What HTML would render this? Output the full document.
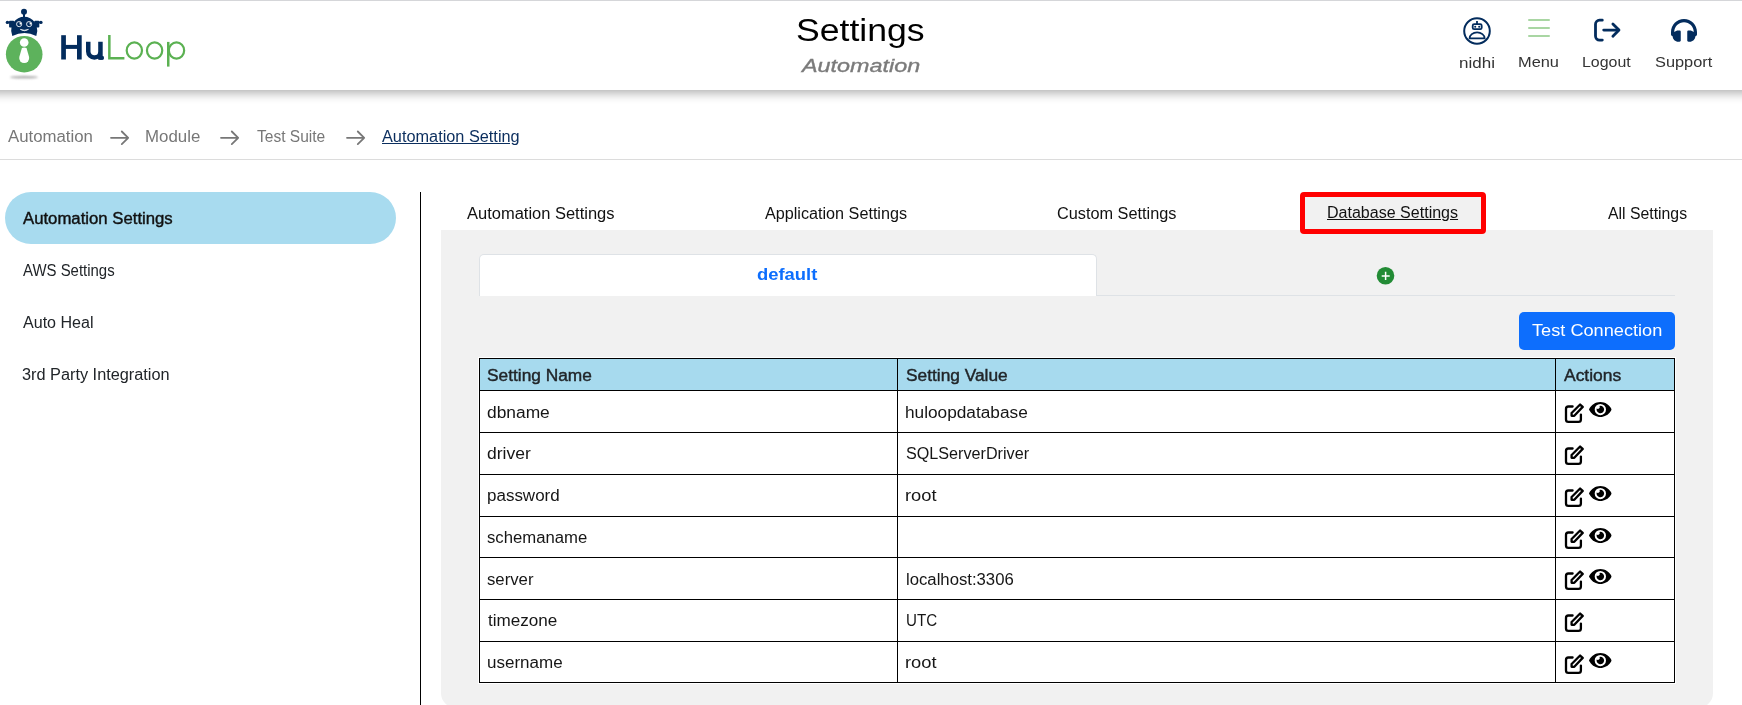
<!DOCTYPE html>
<html>
<head>
<meta charset="utf-8">
<title>Settings</title>
<style>
*{margin:0;padding:0;box-sizing:border-box;}
html,body{width:1742px;height:705px;overflow:hidden;background:#fff;}
body{position:relative;font-family:"Liberation Sans",sans-serif;color:#212529;}
.a{position:absolute;white-space:nowrap;}
#topline{left:0;top:0;width:1742px;height:1px;background:#d5d6d9;}
#header{left:-30px;top:1px;width:1802px;height:89px;background:#fff;box-shadow:0 3px 10px rgba(0,0,0,0.32);}
#hr{left:0;top:159px;width:1742px;height:1px;background:#dcdcdc;}
#pill{left:5px;top:192px;width:391px;height:52px;border-radius:26px;background:#a8dbef;}
#vline{left:420px;top:192px;width:1px;height:513px;background:#000;}
#panel{left:441px;top:230px;width:1272px;height:478px;background:#f1f1f1;border-radius:0 0 15px 15px;}
#redbox{left:1300px;top:192px;width:186px;height:42px;border:5px solid #f00;border-radius:4px;background:#f1f1f1;}
#itab{left:479px;top:254px;width:618px;height:42px;background:#fff;border:1px solid #dee2e6;border-bottom:none;border-radius:5px 5px 0 0;}
#itabline{left:1096px;top:295px;width:579px;height:1px;background:#dee2e6;}
#btn{left:1519px;top:312px;width:156px;height:38px;background:#0d6efd;border-radius:5px;}
.hl{left:479px;width:1196px;height:1px;background:#000;}
.vl{top:358px;width:1px;height:325px;background:#000;}
</style>
</head>
<body>
<svg width="0" height="0" style="position:absolute">
<defs>
<symbol id="edit" viewBox="0 0 21 21">
<path d="M8.6 3.5H4.4a2.4 2.4 0 0 0-2.4 2.4V16.4a2.4 2.4 0 0 0 2.4 2.4H14.5a2.4 2.4 0 0 0 2.4-2.4V11.6" fill="none" stroke="#000" stroke-width="2.3" stroke-linecap="round" stroke-linejoin="round"/>
<path d="M16.1 1.5L18.7 3.9L10.3 12.8H7.6V10Z" fill="none" stroke="#000" stroke-width="2.3" stroke-linejoin="round"/>
</symbol>
<symbol id="eye" viewBox="0 64 576 384">
<path d="M572.52 241.4C518.29 135.59 410.93 64 288 64S57.68 135.64 3.48 241.41a32.35 32.35 0 0 0 0 29.19C57.71 376.41 165.07 448 288 448s230.32-71.64 284.52-177.41a32.35 32.35 0 0 0 0-29.19zM288 400a144 144 0 1 1 144-144 143.93 143.93 0 0 1-144 144zm0-240a95.31 95.31 0 0 0-25.31 3.79 47.85 47.85 0 0 1-66.9 66.9A95.78 95.78 0 1 0 288 160z" fill="#000"/>
</symbol>
<filter id="blur1" x="-50%" y="-300%" width="200%" height="700%"><feGaussianBlur stdDeviation="0.9"/></filter>
</defs>
</svg>

<div class="a" id="header"></div>
<div class="a" id="topline"></div>

<svg class="a" style="left:0;top:0" width="200" height="90" viewBox="0 0 200 90">
<g fill="#032c5d">
<circle cx="24" cy="11.8" r="3"/>
<rect x="23" y="12" width="2" height="6"/>
<path d="M13.6 22.2A13.1 13.1 0 0 1 34.8 22.2L36.6 26L37.3 31L36.3 35.9Q24.2 30.2 12.3 36.1L11.2 31L11.6 26Z"/>
<rect x="9.1" y="20.8" width="5" height="6.8" rx="0.8"/>
<rect x="34.3" y="20.8" width="5" height="6.8" rx="0.8"/>
<circle cx="7.4" cy="22.4" r="1.7"/>
<circle cx="40.9" cy="22.4" r="1.7"/>
<rect x="7.4" y="21.6" width="3" height="1.6"/>
<rect x="38" y="21.6" width="3" height="1.6"/>
</g>
<g fill="none" stroke="#fff" stroke-width="0.85">
<circle cx="19.15" cy="24.1" r="2.6"/>
<circle cx="29.15" cy="24.1" r="2.6"/>
</g>
<path d="M19.6 22.1A2.1 2.1 0 0 1 21.2 24.5L19.6 24.5Z" fill="#fff"/>
<path d="M29.6 22.1A2.1 2.1 0 0 1 31.2 24.5L29.6 24.5Z" fill="#fff"/>
<path d="M20.3 29.4Q24.3 32.2 28.5 29.4Q24.3 31.0 20.3 29.4Z" fill="#fff" stroke="#fff" stroke-width="0.6"/>
<circle cx="24.2" cy="54.2" r="18.3" fill="#5db25c"/>
<circle cx="24.2" cy="42.5" r="4.3" fill="#fff"/>
<path d="M21.9 48Q24.2 46.8 26.5 48L29.1 57A5 5 0 1 1 19.3 57Z" fill="#fff"/>
<ellipse cx="24" cy="77.2" rx="14" ry="1.4" fill="#999" opacity="0.75" filter="url(#blur1)"/>
<g fill="#032c5d">
<rect x="61.2" y="35.2" width="4.7" height="24.3"/>
<rect x="77" y="35.2" width="4.7" height="24.3"/>
<rect x="63" y="44.9" width="16" height="4"/>
</g>
<path d="M88.25 41.7V51.45A6.1 6.1 0 0 0 100.45 51.45V41.7M100.45 50V59.8" fill="none" stroke="#032c5d" stroke-width="4.5"/>
<rect x="99" y="56" width="4.9" height="3.8" rx="1.2" fill="#032c5d"/>
<g fill="none" stroke="#5bb152">
<path d="M109.35 35.1V58.35H124.4" stroke-width="2.5"/>
<ellipse cx="134.35" cy="50.55" rx="7.65" ry="8.1" stroke-width="2.2"/>
<ellipse cx="154.6" cy="50.55" rx="7.65" ry="8.1" stroke-width="2.2"/>
<path d="M168.25 41.9V66.6" stroke-width="2.5"/>
<ellipse cx="176.5" cy="50.55" rx="7.65" ry="8.1" stroke-width="2.2"/>
</g>
</svg>

<svg class="a" style="left:1460px;top:14px" width="34" height="34" viewBox="0 0 34 34">
<circle cx="17" cy="17" r="12.8" fill="none" stroke="#032c5d" stroke-width="2"/>
<g fill="none" stroke="#032c5d" stroke-width="1.8">
<rect x="12.7" y="10.2" width="9" height="5" rx="1.5"/>
<line x1="17" y1="7" x2="17" y2="10.2"/>
<path d="M9.6 24.3H24.6A7.5 5.9 0 0 0 9.6 24.3Z"/>
</g>
<circle cx="15.2" cy="12.8" r="1.05" fill="#032c5d"/>
<circle cx="19.2" cy="12.8" r="1.05" fill="#032c5d"/>
</svg>
<svg class="a" style="left:1520px;top:12px" width="40" height="30" viewBox="0 0 40 30">
<g stroke="#a9d6a3" stroke-width="2" stroke-linecap="round">
<line x1="9" y1="8" x2="29" y2="8"/>
<line x1="9" y1="16" x2="29" y2="16"/>
<line x1="9" y1="24" x2="29" y2="24"/>
</g>
</svg>
<svg class="a" style="left:1590px;top:14px" width="34" height="32" viewBox="0 0 34 32">
<g fill="none" stroke="#032c5d" stroke-width="2.8" stroke-linecap="round" stroke-linejoin="round">
<path d="M12.3 6.2H9.5a4 4 0 0 0-4 4V22.1a4 4 0 0 0 4 4H12.3"/>
<path d="M13.7 16.1H28.6"/>
<path d="M22.9 9.9L29 16.1L22.9 22.3"/>
</g>
</svg>
<svg class="a" style="left:1671px;top:18.8px" width="26" height="22.75" viewBox="0 32 512 448">
<path fill="#032c5d" d="M256 32C114.52 32 0 146.496 0 288v48a32 32 0 0 0 17.689 28.622l14.383 7.191C34.083 431.903 83.421 480 144 480h24c13.255 0 24-10.745 24-24V280c0-13.255-10.745-24-24-24h-24c-31.342 0-59.671 12.879-80 33.627V288c0-105.869 86.131-192 192-192s192 86.131 192 192v1.627C427.671 268.879 399.342 256 368 256h-24c-13.255 0-24 10.745-24 24v176c0 13.255 10.745 24 24 24h24c60.579 0 109.917-48.098 111.928-108.187l14.382-7.191A32 32 0 0 0 512 336v-48c0-141.479-114.496-256-256-256z"/>
</svg>

<svg class="a" style="left:108px;top:129px" width="24" height="18" viewBox="0 0 24 18"><g fill="none" stroke="#777" stroke-width="1.8" stroke-linecap="round" stroke-linejoin="round"><path d="M3 8.8H20.2M13.8 2.5L20.2 8.8L13.8 15.1"/></g></svg>
<svg class="a" style="left:218px;top:129px" width="24" height="18" viewBox="0 0 24 18"><g fill="none" stroke="#777" stroke-width="1.8" stroke-linecap="round" stroke-linejoin="round"><path d="M3 8.8H20.2M13.8 2.5L20.2 8.8L13.8 15.1"/></g></svg>
<svg class="a" style="left:344px;top:129px" width="24" height="18" viewBox="0 0 24 18"><g fill="none" stroke="#777" stroke-width="1.8" stroke-linecap="round" stroke-linejoin="round"><path d="M3 8.8H20.2M13.8 2.5L20.2 8.8L13.8 15.1"/></g></svg>
<div class="a" id="hr"></div>

<div class="a" id="pill"></div>
<div class="a" id="vline"></div>

<div class="a" id="panel"></div>
<div class="a" id="redbox"></div>
<div class="a" id="itab"></div>
<div class="a" id="itabline"></div>
<svg class="a" style="left:1376px;top:266px" width="19" height="19" viewBox="0 0 19 19">
<circle cx="9.5" cy="9.8" r="8.8" fill="#228b35"/>
<path d="M5.7 9.9H13.7M9.6 5.7V14.1" stroke="#fff" stroke-width="1.5"/>
</svg>
<div class="a" id="btn"></div>

<div class="a" style="left:478px;top:357px;width:1198px;height:327px;background:#fff;"></div>
<div class="a" style="left:480px;top:359px;width:1194px;height:31px;background:#a7daee;"></div>
<div class="a hl" style="top:358px;"></div>
<div class="a hl" style="top:390px;"></div>
<div class="a hl" style="top:432px;"></div>
<div class="a hl" style="top:474px;"></div>
<div class="a hl" style="top:516px;"></div>
<div class="a hl" style="top:557px;"></div>
<div class="a hl" style="top:599px;"></div>
<div class="a hl" style="top:641px;"></div>
<div class="a hl" style="top:682px;"></div>
<div class="a vl" style="left:479px;"></div>
<div class="a vl" style="left:897px;"></div>
<div class="a vl" style="left:1555px;"></div>
<div class="a vl" style="left:1674px;"></div>
<svg class="a" style="left:1564px;top:403px;" width="21" height="21" viewBox="0 0 21 21"><use href="#edit"/></svg>
<svg class="a" style="left:1589px;top:402px;" width="22.7" height="15.1" viewBox="0 0 576 384"><use href="#eye"/></svg>
<svg class="a" style="left:1564px;top:445px;" width="21" height="21" viewBox="0 0 21 21"><use href="#edit"/></svg>
<svg class="a" style="left:1564px;top:487px;" width="21" height="21" viewBox="0 0 21 21"><use href="#edit"/></svg>
<svg class="a" style="left:1589px;top:486px;" width="22.7" height="15.1" viewBox="0 0 576 384"><use href="#eye"/></svg>
<svg class="a" style="left:1564px;top:529px;" width="21" height="21" viewBox="0 0 21 21"><use href="#edit"/></svg>
<svg class="a" style="left:1589px;top:528px;" width="22.7" height="15.1" viewBox="0 0 576 384"><use href="#eye"/></svg>
<svg class="a" style="left:1564px;top:570px;" width="21" height="21" viewBox="0 0 21 21"><use href="#edit"/></svg>
<svg class="a" style="left:1589px;top:569px;" width="22.7" height="15.1" viewBox="0 0 576 384"><use href="#eye"/></svg>
<svg class="a" style="left:1564px;top:612px;" width="21" height="21" viewBox="0 0 21 21"><use href="#edit"/></svg>
<svg class="a" style="left:1564px;top:654px;" width="21" height="21" viewBox="0 0 21 21"><use href="#edit"/></svg>
<svg class="a" style="left:1589px;top:653px;" width="22.7" height="15.1" viewBox="0 0 576 384"><use href="#eye"/></svg>

<div class="a" style="left:795.6px;top:14.8px;font-size:31px;line-height:31px;color:#000;transform:scaleX(1.1486);transform-origin:0 0;">Settings</div>
<div class="a" style="left:801.66px;top:56.6px;font-size:18.5px;line-height:18.5px;font-style:italic;color:#7b7b7b;-webkit-text-stroke:0.35px #7b7b7b;transform:scaleX(1.2628);transform-origin:0 0;">Automation</div>
<div class="a" style="left:1459.19px;top:55.9px;font-size:14px;line-height:14px;color:#333;transform:scaleX(1.2143);transform-origin:0 0;">nidhi</div>
<div class="a" style="left:1518.43px;top:55.0px;font-size:14px;line-height:14px;color:#333;transform:scaleX(1.1697);transform-origin:0 0;">Menu</div>
<div class="a" style="left:1582.46px;top:54.8px;font-size:14px;line-height:14px;color:#333;transform:scaleX(1.1381);transform-origin:0 0;">Logout</div>
<div class="a" style="left:1654.83px;top:54.8px;font-size:14px;line-height:14px;color:#333;transform:scaleX(1.1667);transform-origin:0 0;">Support</div>
<div class="a" style="left:8.4px;top:128.7px;font-size:16px;line-height:16px;color:#777;transform:scaleX(1.0487);transform-origin:0 0;">Automation</div>
<div class="a" style="left:145.15px;top:128.7px;font-size:16px;line-height:16px;color:#777;transform:scaleX(1.0529);transform-origin:0 0;">Module</div>
<div class="a" style="left:256.8px;top:128.7px;font-size:16px;line-height:16px;color:#777;transform:scaleX(0.9714);transform-origin:0 0;">Test Suite</div>
<div class="a" style="left:381.9px;top:128.7px;font-size:16px;line-height:16px;color:#0b2e5e;text-decoration:underline;transform:scaleX(1.0179);transform-origin:0 0;">Automation Setting</div>
<div class="a" style="left:22.7px;top:210.6px;font-size:16px;line-height:16px;-webkit-text-stroke:0.4px #111;color:#111;transform:scaleX(1.0455);transform-origin:0 0;">Automation Settings</div>
<div class="a" style="left:22.7px;top:263.0px;font-size:16px;line-height:16px;color:#212529;transform:scaleX(0.9337);transform-origin:0 0;">AWS Settings</div>
<div class="a" style="left:22.7px;top:315.2px;font-size:16px;line-height:16px;color:#212529;transform:scaleX(1.0043);transform-origin:0 0;">Auto Heal</div>
<div class="a" style="left:21.68px;top:367.4px;font-size:16px;line-height:16px;color:#212529;transform:scaleX(1.0182);transform-origin:0 0;">3rd Party Integration</div>
<div class="a" style="left:466.7px;top:205.9px;font-size:16px;line-height:16px;color:#111;transform:scaleX(1.0301);transform-origin:0 0;">Automation Settings</div>
<div class="a" style="left:765.0px;top:205.9px;font-size:16px;line-height:16px;color:#111;transform:scaleX(1.0107);transform-origin:0 0;">Application Settings</div>
<div class="a" style="left:1056.98px;top:205.9px;font-size:16px;line-height:16px;color:#111;transform:scaleX(1.0172);transform-origin:0 0;">Custom Settings</div>
<div class="a" style="left:1326.7px;top:204.8px;font-size:16px;line-height:16px;color:#111;text-decoration:underline;transform:scaleX(1.0023);transform-origin:0 0;">Database Settings</div>
<div class="a" style="left:1608.0px;top:205.9px;font-size:16px;line-height:16px;color:#111;transform:scaleX(0.9875);transform-origin:0 0;">All Settings</div>
<div class="a" style="left:757.45px;top:266.8px;font-size:16px;line-height:16px;font-weight:bold;color:#0d6efd;transform:scaleX(1.149);transform-origin:0 0;">default</div>
<div class="a" style="left:1532.0px;top:323.2px;font-size:16px;line-height:16px;color:#fff;transform:scaleX(1.136);transform-origin:0 0;">Test Connection</div>
<div class="a" style="left:486.82px;top:368.0px;font-size:16px;line-height:16px;-webkit-text-stroke:0.4px #212529;color:#212529;transform:scaleX(1.0823);transform-origin:0 0;">Setting Name</div>
<div class="a" style="left:905.52px;top:368.0px;font-size:16px;line-height:16px;-webkit-text-stroke:0.4px #212529;color:#212529;transform:scaleX(1.0817);transform-origin:0 0;">Setting Value</div>
<div class="a" style="left:1563.9px;top:367.8px;font-size:16px;line-height:16px;-webkit-text-stroke:0.4px #212529;color:#212529;transform:scaleX(1.0904);transform-origin:0 0;">Actions</div>
<div class="a" style="left:487.11px;top:405.1px;font-size:16px;line-height:16px;color:#161616;transform:scaleX(1.0857);transform-origin:0 0;">dbname</div>
<div class="a" style="left:905.22px;top:405.1px;font-size:16px;line-height:16px;color:#161616;transform:scaleX(1.0777);transform-origin:0 0;">huloopdatabase</div>
<div class="a" style="left:487.11px;top:445.7px;font-size:16px;line-height:16px;color:#161616;transform:scaleX(1.0949);transform-origin:0 0;">driver</div>
<div class="a" style="left:905.59px;top:445.7px;font-size:16px;line-height:16px;color:#161616;transform:scaleX(1.0099);transform-origin:0 0;">SQLServerDriver</div>
<div class="a" style="left:487.14px;top:487.7px;font-size:16px;line-height:16px;color:#161616;transform:scaleX(1.0612);transform-origin:0 0;">password</div>
<div class="a" style="left:905.46px;top:487.7px;font-size:16px;line-height:16px;color:#161616;transform:scaleX(1.1444);transform-origin:0 0;">root</div>
<div class="a" style="left:486.76px;top:530.2px;font-size:16px;line-height:16px;color:#161616;transform:scaleX(1.0442);transform-origin:0 0;">schemaname</div>
<div class="a" style="left:486.75px;top:572.2px;font-size:16px;line-height:16px;color:#161616;transform:scaleX(1.0455);transform-origin:0 0;">server</div>
<div class="a" style="left:905.76px;top:571.8px;font-size:16px;line-height:16px;color:#161616;transform:scaleX(1.0441);transform-origin:0 0;">localhost:3306</div>
<div class="a" style="left:488.0px;top:612.9px;font-size:16px;line-height:16px;color:#161616;transform:scaleX(1.0687);transform-origin:0 0;">timezone</div>
<div class="a" style="left:905.85px;top:612.6px;font-size:16px;line-height:16px;color:#161616;transform:scaleX(0.9452);transform-origin:0 0;">UTC</div>
<div class="a" style="left:486.94px;top:654.8px;font-size:16px;line-height:16px;color:#161616;transform:scaleX(1.0629);transform-origin:0 0;">username</div>
<div class="a" style="left:905.46px;top:654.8px;font-size:16px;line-height:16px;color:#161616;transform:scaleX(1.1444);transform-origin:0 0;">root</div>
</body>
</html>
